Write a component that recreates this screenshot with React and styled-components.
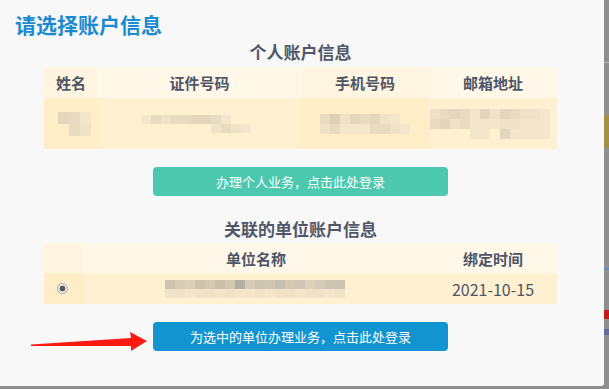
import React from "react";
import styled, { createGlobalStyle } from "styled-components";

const Global = createGlobalStyle`
  html, body { margin: 0; padding: 0; background: #8d8d8d; }
  body { font-family: "Noto Sans CJK SC", "Noto Sans", sans-serif; }
  #root { width: 609px; height: 389px; overflow: hidden; }
`;

const Screen = styled.div`
  display: flex;
  width: 609px;
  height: 389px;
  align-items: flex-start;
`;

const Panel = styled.div`
  position: relative;
  width: 604px;
  height: 386px;
  background: #f8f8f8;
  border-bottom-right-radius: 3px;
  padding-top: 11px;
  box-sizing: border-box;
  flex: none;
`;

const Backdrop = styled.div`
  flex: 1;
  height: 389px;
  display: flex;
  flex-direction: column;
  background: #8f8f8f;
`;

const Mark = styled.div`
  height: ${(p) => p.$h}px;
  margin-top: ${(p) => p.$top}px;
  background: ${(p) => p.$c};
`;

const Title = styled.h1`
  margin: 0;
  padding-left: 15px;
  font-size: 21px;
  line-height: 26px;
  font-weight: bold;
  color: #1a8ad2;
`;

const Content = styled.div`
  width: 513px;
  margin-left: 44px;
  display: flex;
  flex-direction: column;
`;

const SectionTitle = styled.h2`
  margin: ${(p) => p.$mt}px 0 ${(p) => p.$mb}px;
  font-size: 17px;
  line-height: 22px;
  font-weight: bold;
  text-align: center;
  color: #4f5768;
`;

const Table = styled.div`
  display: grid;
  grid-template-columns: ${(p) => p.$cols};
`;

const HeadCell = styled.div`
  height: ${(p) => p.$h}px;
  display: flex;
  align-items: center;
  justify-content: center;
  font-size: 15px;
  font-weight: bold;
  color: #4d5567;
  background: ${(p) => (p.$odd ? "#fff5e0" : "#fff8e9")};
`;

const DataCell = styled.div`
  height: ${(p) => p.$h}px;
  display: flex;
  align-items: center;
  justify-content: ${(p) => p.$justify || "center"};
  padding-left: ${(p) => p.$pl || 0}px;
  font-size: 16px;
  color: #4d5567;
  background: ${(p) => (p.$odd ? "#ffedc8" : "#fff0d1")};
  box-sizing: border-box;
`;

const Mosaic = styled.div`
  display: grid;
  grid-template-columns: repeat(${(p) => p.$n}, ${(p) => p.$w}px);
  grid-auto-rows: ${(p) => p.$rh}px;
  margin-left: ${(p) => p.$ml || 0}px;
  margin-top: ${(p) => p.$mt || 0}px;
`;

const Tile = styled.span`
  display: block;
`;

const Radio = styled.span`
  width: 11px;
  height: 11px;
  border-radius: 50%;
  border: 1px solid #a9a9a9;
  background: radial-gradient(circle, #5a5a5a 0 2.6px, #e9e9e9 3.2px, #f4f4f4 100%);
  box-sizing: border-box;
  margin-left: -2px;
`;

const Button = styled.button`
  display: block;
  align-self: center;
  width: 295px;
  height: 29px;
  margin-top: 18px;
  border: none;
  border-radius: 4px;
  background: ${(p) => p.$bg};
  color: #fff;
  font-family: "Noto Sans CJK SC", sans-serif;
  font-size: 13px;
  line-height: 29px;
  padding: 0;
  cursor: pointer;
`;

const Arrow = styled.svg`
  position: absolute;
  left: 0;
  top: 0;
  pointer-events: none;
`;

function Blur({ rows, w = 10, rh = 12, ml, mt }) {
  const n = rows[0].length;
  return (
    <Mosaic $n={n} $w={w} $rh={rh} $ml={ml} $mt={mt}>
      {rows.flatMap((r, i) =>
        r.map((c, j) => <Tile key={i + "-" + j} style={{ background: c || "transparent" }} />)
      )}
    </Mosaic>
  );
}

const A = "#e4d6ba";
const B = "#e8dbc0";
const C = "#efe2c6";
const D = "#f3e6ca";
const E = "#ddd0b4";

export default function App() {
  return (
    <>
      <Global />
      <Screen>
        <Panel>
          <Title>请选择账户信息</Title>
          <Content>
            <SectionTitle $mt={4} $mb={4}>个人账户信息</SectionTitle>
            <Table $cols="54px 203px 128px 128px">
              <HeadCell $h={31} $odd>姓名</HeadCell>
              <HeadCell $h={31}>证件号码</HeadCell>
              <HeadCell $h={31} $odd>手机号码</HeadCell>
              <HeadCell $h={31}>邮箱地址</HeadCell>
              <DataCell $h={51} $odd>
                <Blur ml={6} rows={[[A, B, D], [null, B, C]]} w={11} rh={12} />
              </DataCell>
              <DataCell $h={51}>
                <Blur
                  ml={2}
                  rows={[
                    [D, B, C, B, B, A, A, B, D, null, null, null],
                    [null, null, null, null, null, null, null, C, B, C, D, null],
                  ]}
                  w={10}
                  rh={9}
                />
              </DataCell>
              <DataCell $h={51} $odd>
                <Blur
                  rows={[
                    [B, E, C, A, B, A, C, D, null],
                    [C, B, D, D, D, B, B, C, D],
                  ]}
                  w={10}
                  rh={10}
                />
              </DataCell>
              <DataCell $h={51}>
                <Blur
                  ml={4}
                  rows={[
                    [C, B, A, B, D, A, C, A, B, C, C, D, null],
                    [B, A, C, B, D, D, D, C, C, D, D, D, null],
                    [null, null, null, null, D, D, null, A, D, D, D, D, null],
                  ]}
                  w={10}
                  rh={10}
                />
              </DataCell>
            </Table>
            <Button $bg="#4bc8ad">办理个人业务，点击此处登录</Button>
            <SectionTitle $mt={22} $mb={3}>关联的单位账户信息</SectionTitle>
            <Table $cols="39px 346px 128px">
              <HeadCell $h={30} $odd></HeadCell>
              <HeadCell $h={30}>单位名称</HeadCell>
              <HeadCell $h={30}>绑定时间</HeadCell>
              <DataCell $h={31} $odd>
                <Radio />
              </DataCell>
              <DataCell $h={31} $justify="flex-start" $pl={82}>
                <Blur
                  rows={[
                    ["#cfc3b0", "#d8ccb4", "#dbcfb7", "#cec3ad", "#d4c9b2", "#c9bfaa", "#d3c8b1", "#b4b0a2", "#d6cbb4", "#cfc6b2", "#d0c6b1", "#c7bfad", "#d4c9b3", "#cfc6b3", "#ddd1ba", "#d5cbb6", "#cdc4b1", "#ccc4b2"],
                    [C, C, D, C, C, D, C, D, D, C, D, C, C, D, C, C, D, C],
                  ]}
                  w={10}
                  rh={9}
                />
              </DataCell>
              <DataCell $h={31}>2021-10-15</DataCell>
            </Table>
            <Button $bg="#1294d0">为选中的单位办理业务，点击此处登录</Button>
          </Content>
          <Arrow width="604" height="386" viewBox="0 0 604 386">
            <polygon
              points="31,344.5 131,338 130,332 147,341 131,351 131,346 31,346"
              fill="#ff1a10"
            />
          </Arrow>
        </Panel>
        <Backdrop>
          <Mark $top={62} $h={1} $c="#b5b5b5" />
          <Mark $top={52} $h={33} $c="#a58f45" />
          <Mark $top={120} $h={2} $c="#5b8fd0" />
          <Mark $top={40} $h={9} $c="#c41a1a" />
          <Mark $top={10} $h={6} $c="#6a6a9a" />
        </Backdrop>
      </Screen>
    </>
  );
}
